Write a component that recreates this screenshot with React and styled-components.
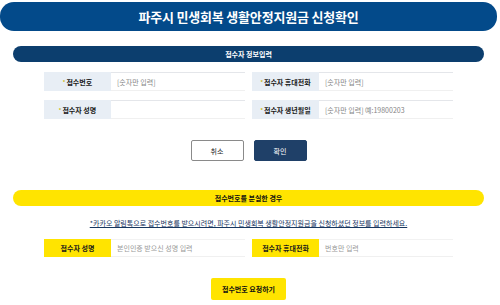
import React from "react";
import styled, { createGlobalStyle } from "styled-components";

const Global = createGlobalStyle`
  html, body { margin: 0; padding: 0; background: #fff; }
  body { font-family: "Noto Sans CJK KR", "Noto Sans", sans-serif; width: 500px; }
  * { box-sizing: border-box; }
`;

const Page = styled.div`
  width: 500px;
  padding-top: 2px;
`;

const Header = styled.h1`
  margin: 0 3px 0 0;
  height: 29px;
  border-radius: 14px;
  background: #034a8a;
  color: #fff;
  font-size: 13px;
  font-weight: 700;
  display: flex;
  align-items: center;
  justify-content: center;
  letter-spacing: -0.2px;
`;

const Content = styled.div`
  margin: 0 16px 0 13px;
  display: flex;
  flex-direction: column;
`;

const Bar = styled.div`
  height: 16px;
  border-radius: 8px;
  background: ${(p) => (p.$yellow ? "#ffe400" : "#0c3e6e")};
  color: ${(p) => (p.$yellow ? "#111" : "#fff")};
  font-size: 7px;
  font-weight: 700;
  display: flex;
  align-items: center;
  justify-content: center;
  margin-top: ${(p) => p.$top}px;
`;

const FormGrid = styled.div`
  display: grid;
  grid-template-columns: 201px 201px;
  column-gap: 7px;
  row-gap: 9px;
  padding: 0 31px;
  margin-top: ${(p) => p.$top}px;
`;

const Row = styled.div`
  display: flex;
  height: ${(p) => (p.$yellow ? 18 : 19)}px;
  border-top: 1px solid ${(p) => (p.$yellow ? "#f2f2f2" : "#e4e6ea")};
  border-bottom: 1px solid #f0f0f0;
`;

const Label = styled.div`
  width: 67px;
  flex: none;
  margin-top: -1px;
  margin-bottom: -1px;
  background: ${(p) => (p.$yellow ? "#ffe400" : "#e8eef5")};
  color: #1a1a1a;
  font-size: 7px;
  font-weight: 700;
  display: flex;
  align-items: center;
  justify-content: center;
`;

const Star = styled.span`
  color: #c8b400;
  font-size: 5px;
  margin-right: 1px;
  align-self: flex-start;
  margin-top: 6px;
`;

const Field = styled.input`
  flex: 1;
  min-width: 0;
  border: none;
  outline: none;
  background: #fff;
  padding: 0 0 0 6px;
  font-family: "Noto Sans CJK KR", "Noto Sans", sans-serif;
  font-size: 7px;
  color: #333;
  &::placeholder { color: ${(p) => (p.$yellow ? "#999" : "#858585")}; }
`;

const Buttons = styled.div`
  display: flex;
  justify-content: center;
  gap: 10px;
  margin-top: 21px;
`;

const Btn = styled.button`
  width: 53px;
  height: 21px;
  border-radius: 2px;
  font-family: "Noto Sans CJK KR", "Noto Sans", sans-serif;
  font-size: 7px;
  padding: 0;
  border: 1px solid ${(p) => (p.$primary ? "#1f4068" : "#8a8a8a")};
  background: ${(p) => (p.$primary ? "#1f4068" : "#fff")};
  color: ${(p) => (p.$primary ? "#fff" : "#222")};
`;

const Notice = styled.p`
  margin: 11px 0 0;
  text-align: center;
  font-size: 7px;
  line-height: 12px;
  color: #17365f;
  text-decoration: underline;
`;

const RequestBtn = styled.button`
  align-self: center;
  width: 75px;
  height: 22px;
  margin-top: 21px;
  border: none;
  border-radius: 2px;
  background: #ffe400;
  color: #111;
  font-family: "Noto Sans CJK KR", "Noto Sans", sans-serif;
  font-size: 7px;
  font-weight: 700;
  padding: 0;
`;

function InfoRow({ label, placeholder, star, yellow }) {
  return (
    <Row $yellow={yellow}>
      <Label $yellow={yellow}>
        {star && <Star>*</Star>}
        {label}
      </Label>
      <Field $yellow={yellow} placeholder={placeholder} />
    </Row>
  );
}

export default function App() {
  return (
    <Page>
      <Global />
      <Header>파주시 민생회복 생활안정지원금 신청확인</Header>
      <Content>
        <Bar $top={15}>접수자 정보입력</Bar>
        <FormGrid $top={10}>
          <InfoRow star label="접수번호" placeholder="[숫자만 입력]" />
          <InfoRow star label="접수자 휴대전화" placeholder="[숫자만 입력]" />
          <InfoRow star label="접수자 성명" placeholder="" />
          <InfoRow star label="접수자 생년월일" placeholder="[숫자만 입력] 예:19800203" />
        </FormGrid>
        <Buttons>
          <Btn>취소</Btn>
          <Btn $primary>확인</Btn>
        </Buttons>
        <Bar $yellow $top={29}>접수번호를 분실한 경우</Bar>
        <Notice>*카카오 알림톡으로 접수번호를 받으시려면, 파주시 민생회복 생활안정지원금을 신청하셨던 정보를 입력하세요.</Notice>
        <FormGrid $top={10}>
          <InfoRow yellow label="접수자 성명" placeholder="본인인증 받으신 성명 입력" />
          <InfoRow yellow label="접수자 휴대전화" placeholder="번호만 입력" />
        </FormGrid>
        <RequestBtn>접수번호 요청하기</RequestBtn>
      </Content>
    </Page>
  );
}
